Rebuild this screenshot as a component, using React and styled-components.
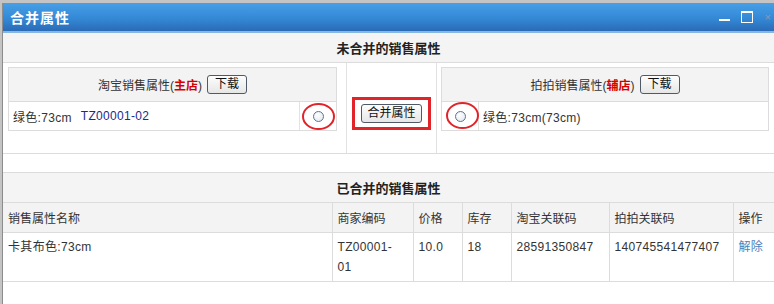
import React from "react";
import styled, { createGlobalStyle } from "styled-components";

const GlobalStyle = createGlobalStyle`
  html, body {
    margin: 0;
    padding: 0;
    overflow: hidden;
    background: #c4c4c4;
  }
  body {
    font-family: "Liberation Sans", "Noto Sans CJK SC", sans-serif;
    font-size: 12px;
    color: #333;
  }
`;

const Desk = styled.div`
  width: 774px;
  height: 304px;
  padding: 3px 0 0 2px;
  box-sizing: border-box;
  background: #c4c4c4;
`;

const Window = styled.div`
  height: 301px;
  background: #fff;
  border-left: 1px solid #8c8c8c;
  overflow: hidden;
`;

const TitleBar = styled.div`
  height: 28px;
  display: flex;
  align-items: center;
  padding: 0 0 0 7px;
  background: linear-gradient(#479fe6, #3489d6 55%, #2a6bb5);
  border-bottom: 2px solid #86b6e2;
`;

const Title = styled.div`
  flex: 1;
  color: #fff;
  font-weight: bold;
  font-size: 14px;
  letter-spacing: 1px;
`;

const Minimize = styled.span`
  width: 11px;
  height: 2px;
  margin-top: 6px;
  background: #fff;
`;

const Maximize = styled.span`
  width: 10px;
  height: 9px;
  margin-left: 11px;
  border: 1px solid #fff;
  border-top-width: 2px;
`;

const Close = styled.span`
  margin: 0 3px 0 12px;
  color: #c99aa8;
  font-size: 11px;
  opacity: 0.6;
`;

const SectionHead = styled.div`
  height: 29px;
  display: flex;
  align-items: center;
  justify-content: center;
  background: #f4f4f4;
  font-weight: bold;
  font-size: 13px;
  color: #222;
  border-top: ${(p) => (p.$top ? "1px solid #dcdcdc" : "none")};
  border-bottom: 1px solid #dcdcdc;
`;

const TopRow = styled.div`
  display: grid;
  grid-template-columns: 344px 90px 1fr;
  height: 90px;
  border-bottom: 1px solid #dcdcdc;
`;

const Cell = styled.div`
  padding: ${(p) => p.$pad};
  border-right: ${(p) => (p.$divider ? "1px solid #e2e2e2" : "none")};
  display: flex;
  flex-direction: column;
  align-items: ${(p) => (p.$center ? "center" : "stretch")};
`;

const Inner = styled.div`
  border: 1px solid #dcdcdc;
`;

const InnerHead = styled.div`
  height: 33px;
  display: flex;
  align-items: center;
  justify-content: center;
  gap: 5px;
  background: #f3f3f3;
  border-bottom: 1px solid #dcdcdc;
`;

const Shop = styled.b`
  color: #d40000;
`;

const InnerRow = styled.div`
  height: 28px;
  display: grid;
  grid-template-columns: ${(p) => p.$cols};
  align-items: stretch;
`;

const RowText = styled.div`
  display: flex;
  align-items: center;
  padding-left: 4px;
  gap: 9px;
  letter-spacing: 0.3px;
`;

const Code = styled.span`
  color: #1c2a8c;
`;

const RadioCell = styled.div`
  position: relative;
  display: flex;
  align-items: center;
  justify-content: center;
  border-left: ${(p) => (p.$side === "right" ? "1px solid #e2e2e2" : "none")};
  border-right: ${(p) => (p.$side === "left" ? "1px solid #e2e2e2" : "none")};
`;

const Radio = styled.span`
  width: 11px;
  height: 11px;
  border-radius: 50%;
  border: 1px solid #5a7394;
  background: radial-gradient(circle at 40% 35%, #fff, #dfe4ec);
  box-sizing: border-box;
`;

const Ring = styled.span`
  position: absolute;
  left: ${(p) => p.$x}px;
  top: ${(p) => p.$y}px;
  width: 29px;
  height: 23px;
  border: 2.5px solid #e0242a;
  border-radius: 50%;
`;

const Button = styled.button`
  height: 19px;
  padding: 0 ${(p) => p.$px || 7}px;
  font-family: "Liberation Sans", "Noto Sans CJK SC", sans-serif;
  font-size: 12px;
  color: #111;
  line-height: 15px;
  border: 1px solid #4f5a66;
  border-radius: 3px;
  background: linear-gradient(#fdfdfd, #e6e6e6);
  cursor: pointer;
`;

const RedBox = styled.div`
  padding: 4px 6px;
  border: 3px solid #e0242a;
  display: flex;
`;

const Spacer = styled.div`
  height: 18px;
`;

const Table = styled.table`
  width: 100%;
  border-collapse: collapse;
  table-layout: fixed;
`;

const Th = styled.th`
  height: 29px;
  padding: 0 5px;
  text-align: left;
  font-weight: normal;
  background: #f3f3f3;
  border-bottom: 1px solid #dcdcdc;
  border-right: 1px solid #dcdcdc;
  &:last-child {
    border-right: none;
  }
`;

const Td = styled.td`
  height: 47px;
  padding: 4px ${(p) => (p.$tight ? 12 : 5)}px 4px 5px;
  line-height: 20px;
  letter-spacing: 0.33px;
  vertical-align: top;
  border-bottom: 1px solid #dcdcdc;
  border-right: 1px solid #dcdcdc;
  box-sizing: border-box;
  &:last-child {
    border-right: none;
  }
`;

const Link = styled.a`
  color: #4b82b8;
  text-decoration: none;
`;

const columns = [
  { label: "销售属性名称", width: 329 },
  { label: "商家编码", width: 81 },
  { label: "价格", width: 49 },
  { label: "库存", width: 49 },
  { label: "淘宝关联码", width: 98 },
  { label: "拍拍关联码", width: 124 },
  { label: "操作", width: 41 },
];

const merged = [
  {
    name: "卡其布色:73cm",
    code: "TZ00001-01",
    price: "10.0",
    stock: "18",
    taobao: "28591350847",
    paipai: "140745541477407",
  },
];

export default function App() {
  return (
    <>
      <GlobalStyle />
      <Desk>
        <Window>
          <TitleBar>
            <Title>合并属性</Title>
            <Minimize />
            <Maximize />
            <Close>×</Close>
          </TitleBar>

          <SectionHead>未合并的销售属性</SectionHead>
          <TopRow>
            <Cell $pad="4px 9px 0 5px" $divider>
              <Inner>
                <InnerHead>
                  <span>
                    淘宝销售属性(<Shop>主店</Shop>)
                  </span>
                  <Button>下载</Button>
                </InnerHead>
                <InnerRow $cols="1fr 37px">
                  <RowText>
                    <span>绿色:73cm</span>
                    <Code>TZ00001-02</Code>
                  </RowText>
                  <RadioCell $side="right">
                    <Radio />
                    <Ring $x={2} $y={1} />
                  </RadioCell>
                </InnerRow>
              </Inner>
            </Cell>
            <Cell $pad="34px 0 0 0" $divider $center>
              <RedBox>
                <Button $px={5}>合并属性</Button>
              </RedBox>
            </Cell>
            <Cell $pad="4px 5px 0 4px">
              <Inner>
                <InnerHead>
                  <span>
                    拍拍销售属性(<Shop>辅店</Shop>)
                  </span>
                  <Button>下载</Button>
                </InnerHead>
                <InnerRow $cols="37px 1fr">
                  <RadioCell $side="left">
                    <Radio />
                    <Ring $x={4} $y={0} />
                  </RadioCell>
                  <RowText>
                    <span>绿色:73cm(73cm)</span>
                  </RowText>
                </InnerRow>
              </Inner>
            </Cell>
          </TopRow>

          <Spacer />
          <SectionHead $top>已合并的销售属性</SectionHead>
          <Table>
            <colgroup>
              {columns.map((c) => (
                <col key={c.label} style={{ width: c.width }} />
              ))}
            </colgroup>
            <thead>
              <tr>
                {columns.map((c) => (
                  <Th key={c.label}>{c.label}</Th>
                ))}
              </tr>
            </thead>
            <tbody>
              {merged.map((row) => (
                <tr key={row.code}>
                  <Td>{row.name}</Td>
                  <Td $tight>{row.code}</Td>
                  <Td>{row.price}</Td>
                  <Td>{row.stock}</Td>
                  <Td>{row.taobao}</Td>
                  <Td>{row.paipai}</Td>
                  <Td>
                    <Link href="#">解除</Link>
                  </Td>
                </tr>
              ))}
            </tbody>
          </Table>
        </Window>
      </Desk>
    </>
  );
}
